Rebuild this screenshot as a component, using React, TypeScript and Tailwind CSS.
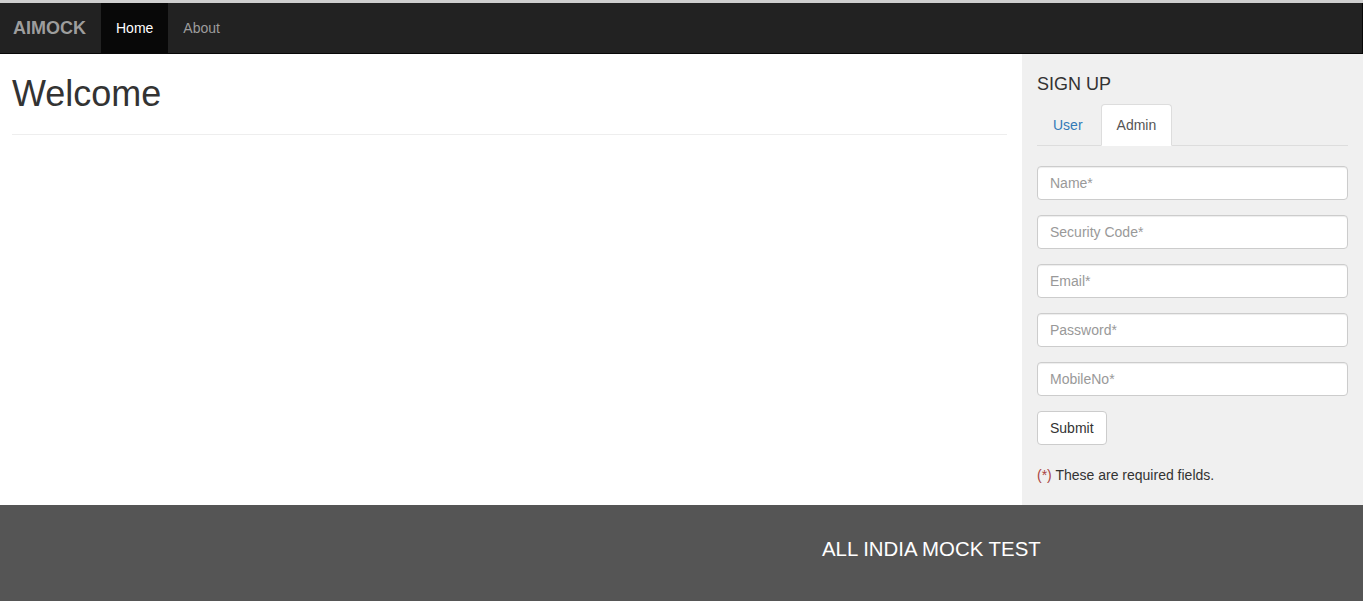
const fields = ["Name*", "Security Code*", "Email*", "Password*", "MobileNo*"];

export default function App() {
  return (
    <div className="min-h-[601px] bg-white font-['Liberation_Sans',Arial,sans-serif] text-[14px] text-[#333]">
      {/* Navbar */}
      <div className="border-t-[3px] border-[#cfcfcf]">
        <nav className="flex h-[51px] items-stretch border-b border-r border-[#080808] bg-[#222]">
          <span className="flex items-center pl-[13px] pr-[15px] text-[18px] font-bold text-[#9d9d9d]">AIMOCK</span>
          <span className="flex items-center bg-[#080808] px-[15px] text-white">Home</span>
          <span className="flex items-center px-[15px] text-[#9d9d9d]">About</span>
        </nav>
      </div>

      <div className="flex">
        {/* Main */}
        <div className="flex-1 px-[12px] pr-[15px]">
          <div className="border-b border-[#eee] pt-[20px] pb-[20px]">
            <h1 className="text-[36px] leading-[40px] text-[#333]">Welcome</h1>
          </div>
        </div>

        {/* Sidebar */}
        <aside className="w-[341px] bg-[#f0f0f0] px-[15px] pt-[20px] pb-[20px]">
          <h3 className="text-[18px] leading-[20px] text-[#333]">SIGN UP</h3>
          <ul className="mt-[10px] flex border-b border-[#ddd]">
            <li className="-mb-px mr-[2px] border border-transparent px-[15px] py-[10px] leading-[20px] text-[#337ab7]">User</li>
            <li className="-mb-px rounded-t-[4px] border border-[#ddd] border-b-transparent bg-white px-[15px] py-[10px] leading-[20px] text-[#555]">Admin</li>
          </ul>
          <form className="mt-[20px] flex flex-col gap-[15px]">
            {fields.map((f) => (
              <input
                key={f}
                placeholder={f}
                className="h-[34px] w-full rounded-[4px] border border-[#ccc] bg-white px-[12px] text-[14px] text-[#555] shadow-[inset_0_1px_1px_rgba(0,0,0,0.075)] placeholder:text-[#999] outline-none"
              />
            ))}
            <div>
              <button type="button" className="h-[34px] rounded-[4px] border border-[#ccc] bg-white px-[12px] text-[14px] text-[#333]">
                Submit
              </button>
            </div>
          </form>
          <p className="mt-[20px] leading-[20px]">
            <span className="text-[#a94442]">(*)</span> These are required fields.
          </p>
        </aside>
      </div>

      {/* Footer */}
      <footer className="h-[96px] bg-[#555] pl-[822px] pt-[30px]">
        <span className="text-[20.4px] leading-[28px] text-white">ALL INDIA MOCK TEST</span>
      </footer>
    </div>
  );
}
